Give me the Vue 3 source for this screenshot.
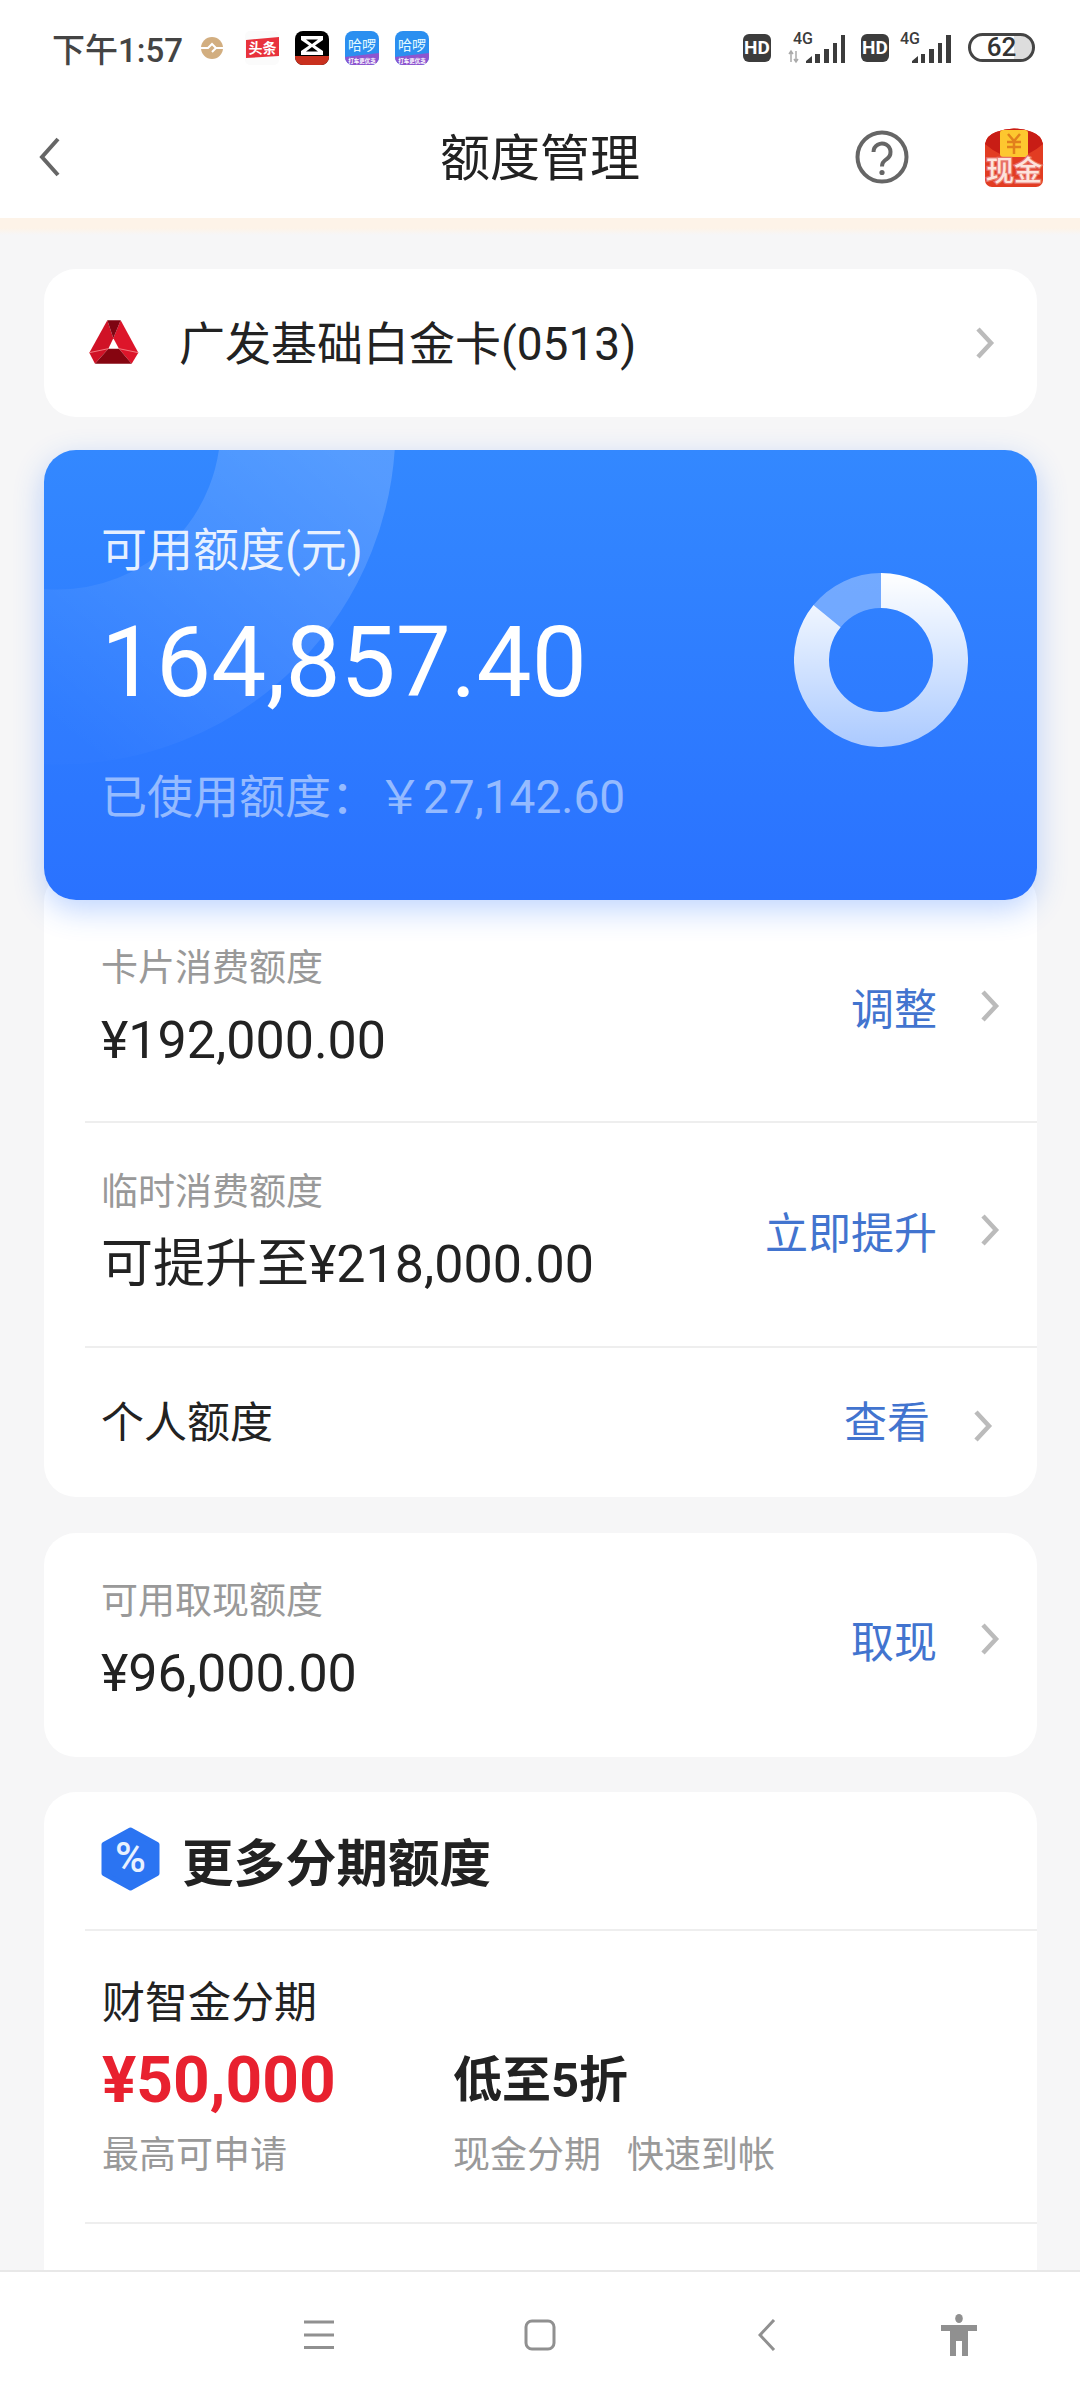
<template>
  <div class="page">
    <div class="status">
      <span class="time">下午1:57</span>
      <svg class="app first" viewBox="0 0 34 34">
        <circle cx="17" cy="17" r="11" fill="#d2ae80" />
        <path d="M6 17h7l4-4 4 4-4 4M21 17h7" fill="none" stroke="#fff" stroke-width="2" />
      </svg>
      <svg class="app" viewBox="0 0 34 34">
        <rect width="34" height="34" rx="5" fill="#fbfbfb" />
        <path d="M1 9 34 6v19L1 27z" fill="#e8323c" />
        <text x="17.5" y="22" text-anchor="middle" font-size="14" font-weight="700" fill="#fff">头条</text>
      </svg>
      <svg class="app" viewBox="0 0 34 34">
        <rect width="34" height="34" rx="8" fill="#000" />
        <path d="M0 25h34v1a8 8 0 0 1-8 8H8a8 8 0 0 1-8-8z" fill="#c9301e" />
        <path d="M6 5h22v4L20 14.500 28 20v4H6v-4l8-5.500L6 9zM11 8.500 17 13l6-4.500zM11 20.500h12L17 16z" fill="#fff" fill-rule="evenodd" />
      </svg>
      <svg v-for="n in 2" :key="n" class="app" viewBox="0 0 34 34">
        <rect width="34" height="34" rx="8" fill="#2b8ff0" />
        <path d="M0 26 34 22v4a8 8 0 0 1-8 8H8a8 8 0 0 1-8-8z" fill="#8e55cf" />
        <text x="17" y="19" text-anchor="middle" font-size="14" fill="#e6fbff">哈啰</text>
        <text x="17" y="31.500" text-anchor="middle" font-size="5.500" font-weight="700" fill="#fff">打车更优惠</text>
      </svg>
      <div class="status-right">
        <span class="hd">HD</span>
        <svg class="sig1" width="58" height="40" viewBox="0 -4 58 40">
          <text x="5" y="12" font-size="16" font-weight="500" fill="#3c3c3c">4G</text>
          <path d="M3 19v11M1 22l2-3 2 3M8 30V19M6 27l2 3 2-3" fill="none" stroke="#aaa" stroke-width="1.500" />
          <path d="M18 31v-2l6-5v7zM27 31v-9h5v9zM36 31V17h5v14zM45 31V11h4v20zM53 31V3h4v28z" fill="#3c3c3c" />
        </svg>
        <span class="hd hd2">HD</span>
        <svg class="sig2" width="52" height="40" viewBox="0 -4 52 40">
          <text x="1" y="12" font-size="16" font-weight="500" fill="#3c3c3c">4G</text>
          <path d="M13 31v-2l6-5v7zM22 31v-9h4v9zM30 31V17h5v14zM39 31V11h4v20zM47 31V3h5v28z" fill="#3c3c3c" />
        </svg>
        <span class="battery">62</span>
      </div>
    </div>

    <div class="nav">
      <svg class="back" width="22" height="40" viewBox="0 0 22 40">
        <path d="M19 2 3 20l16 18" fill="none" stroke="#666" stroke-width="4" />
      </svg>
      <div class="title">额度管理</div>
      <svg class="help" width="54" height="54" viewBox="0 0 54 54">
        <circle cx="27" cy="27" r="24.500" fill="none" stroke="#666" stroke-width="4" />
        <path d="M18.500 22a8.500 8.500 0 1 1 13 7.200c-3 2-4.500 3.600-4.500 7.300" fill="none" stroke="#666" stroke-width="4" />
        <circle cx="27" cy="42.500" r="2.600" fill="#666" />
      </svg>
      <svg class="packet" width="60" height="60" viewBox="0 0 60 60">
        <path d="M1 17Q3 8 12 5 30-2 48 5q9 3 11 12v36a7 7 0 0 1-7 7H8a7 7 0 0 1-7-7z" fill="#e23c22" />
        <path d="M1 17Q3 8 12 5 30-2 48 5q9 3 11 12Q44 30 30 30T1 17z" fill="#c81d15" />
        <rect x="16" y="3" width="28" height="27" rx="3" fill="#fdc72f" />
        <path d="M24 7l6 7 6-7M23 15h14M23 20h14M30 14v13" fill="none" stroke="#e2801c" stroke-width="2.500" />
        <text x="30" y="54" text-anchor="middle" font-size="28" font-weight="500" fill="#fde3dc" stroke="#e8736a" stroke-width="2.500" paint-order="stroke">现金</text>
      </svg>
    </div>
    <div class="strip"></div>

    <div class="main">
      <div class="card bank">
        <svg class="bank-logo" width="90" height="80" viewBox="0 0 270 240">
          <path d="M112 58 130 112 115 143 75 188 58 155z" fill="#d01226" />
          <path d="M152 58 205 155 185 188 147 143 130 112z" fill="#dd152a" />
          <path d="M112 58h40l-22 54z" fill="#7d0512" />
          <path d="M115 143h32l38 45H75z" fill="#860510" />
          <path d="M58 155l57-12M147 143l58 12" stroke="#f27a80" stroke-width="3" />
        </svg>
        <span class="bank-name">广发基础白金卡(0513)</span>
        <svg class="bank-chev" width="22" height="34" viewBox="0 0 22 34">
          <path d="M4 3l13 14L4 31" fill="none" stroke="#bbb" stroke-width="4.500" />
        </svg>
      </div>

      <div class="hero">
        <svg class="hero-bg" width="993" height="450" viewBox="0 0 993 450">
          <defs>
            <linearGradient id="band" gradientUnits="userSpaceOnUse" x1="300" y1="0" x2="60" y2="310">
              <stop offset="0" stop-color="#fff" stop-opacity="0.17" />
              <stop offset="1" stop-color="#fff" stop-opacity="0.01" />
            </linearGradient>
          </defs>
          <circle cx="14" cy="-23" r="250" fill="none" stroke="url(#band)" stroke-width="175" />
        </svg>
        <div class="hero-text">
          <div class="hero-label">可用额度(元)</div>
          <div class="hero-amount">164,857.40</div>
          <div class="hero-used">已使用额度：￥27,142.60</div>
        </div>
        <svg class="donut" width="174" height="174" viewBox="0 0 174 174">
          <defs>
            <linearGradient id="ring" gradientUnits="userSpaceOnUse" x1="0" y1="0" x2="0" y2="174">
              <stop offset="0" stop-color="#fff" />
              <stop offset="1" stop-color="#fff" stop-opacity="0.6" />
            </linearGradient>
          </defs>
          <path :d="availArc" fill="none" stroke="url(#ring)" stroke-width="35" />
          <path :d="usedArc" fill="none" stroke="#fff" stroke-opacity="0.32" stroke-width="35" />
        </svg>
      </div>

      <div class="card limits">
        <div v-for="row in rows" :key="row.label" class="row" :class="row.cls">
          <div class="row-text">
            <div class="row-label">{{ row.label }}</div>
            <div class="row-value">{{ row.value }}</div>
          </div>
          <span class="link">{{ row.link }}</span>
          <svg class="chev" width="22" height="34" viewBox="0 0 22 34">
            <path d="M4 3l13 14L4 31" fill="none" stroke="#bbb" stroke-width="4.500" />
          </svg>
        </div>
        <div class="row row-plain">
          <span class="plain-label">个人额度</span>
          <span class="link">查看</span>
          <svg class="chev" width="22" height="34" viewBox="0 0 22 34">
            <path d="M4 3l13 14L4 31" fill="none" stroke="#bbb" stroke-width="4.500" />
          </svg>
        </div>
      </div>

      <div class="card cash">
        <div class="row-text">
          <div class="row-label">可用取现额度</div>
          <div class="row-value">¥96,000.00</div>
        </div>
        <span class="link">取现</span>
        <svg class="chev" width="22" height="34" viewBox="0 0 22 34">
          <path d="M4 3l13 14L4 31" fill="none" stroke="#bbb" stroke-width="4.500" />
        </svg>
      </div>

      <div class="card more">
        <div class="more-head">
          <svg class="hex" width="59" height="64" viewBox="0 0 59 64">
            <path d="M29.500 3 56 17.500v29L29.500 61 3 46.500v-29z" fill="#2b74f2" stroke="#2b74f2" stroke-width="5" stroke-linejoin="round" />
            <text x="29.500" y="45" text-anchor="middle" font-size="42" font-weight="500" fill="#e8f1ff">%</text>
          </svg>
          <span class="more-title">更多分期额度</span>
        </div>
        <div class="plan">
          <div class="plan-name">财智金分期</div>
          <div class="plan-grid">
            <div class="plan-red">¥50,000</div>
            <div class="plan-rate">低至5折</div>
            <div class="plan-sub">最高可申请</div>
            <div class="plan-sub plan-tags"><span>现金分期</span><span>快速到帐</span></div>
          </div>
        </div>
      </div>
    </div>

    <div class="sysbar">
      <svg width="30" height="30" viewBox="0 0 30 30">
        <path d="M0 2h30M0 15h30M0 27.500h30" stroke="#909090" stroke-width="3" />
      </svg>
      <svg width="32" height="32" viewBox="0 0 32 32">
        <rect x="2" y="2" width="28" height="28" rx="6" fill="none" stroke="#909090" stroke-width="3" />
      </svg>
      <svg width="18" height="32" viewBox="0 0 18 32">
        <path d="M16 1 2 16l14 15" fill="none" stroke="#909090" stroke-width="3" />
      </svg>
      <svg width="36" height="42" viewBox="0 0 36 42">
        <ellipse cx="18" cy="4.500" rx="3.800" ry="4.500" fill="#909090" />
        <path d="M0 11h36v6H27v25h-6V27h-6v15H9V17H0z" fill="#909090" />
      </svg>
    </div>
  </div>
</template>

<script setup>
const limit = 192000
const used = 27142.6

const rows = [
  { label: "卡片消费额度", value: "¥192,000.00", link: "调整", cls: "row-first" },
  { label: "临时消费额度", value: "可提升至¥218,000.00", link: "立即提升", cls: "row-second" },
]

function arc(from, to) {
  const r = 69.5
  const pt = (deg) => {
    const a = (deg * Math.PI) / 180
    return (87 + r * Math.sin(a)).toFixed(2) + " " + (87 - r * Math.cos(a)).toFixed(2)
  }
  const large = to - from > 180 ? 1 : 0
  return "M" + pt(from) + " A" + r + " " + r + " 0 " + large + " 1 " + pt(to)
}

const usedDeg = (used / limit) * 360
const availArc = arc(0, 360 - usedDeg)
const usedArc = arc(360 - usedDeg, 360)
</script>

<style>
html,
body {
  margin: 0;
  background: #fff;
}
</style>

<style scoped>
.page {
  width: 1080px;
  height: 2400px;
  display: flex;
  flex-direction: column;
  overflow: hidden;
  background: #f6f6f7;
  font-family: Roboto, "Noto Sans CJK SC", sans-serif;
  color: #222;
}
svg text {
  font-family: Roboto, "Noto Sans CJK SC", sans-serif;
}

/* status bar */
.status {
  height: 95px;
  flex: none;
  display: flex;
  align-items: center;
  padding: 0 45px 0 52px;
  background: #fff;
  box-sizing: border-box;
}
.time {
  font-size: 33px;
  font-weight: 500;
  color: #444;
  width: 143px;
}
.app {
  width: 34px;
  height: 34px;
  margin-left: 16px;
  flex: none;
}
.app.first {
  margin-left: 0;
}
.status-right {
  margin-left: auto;
  display: flex;
  align-items: center;
}
.hd {
  width: 28px;
  height: 28px;
  border-radius: 6px;
  background: #3c3c3c;
  color: #fff;
  font-size: 19px;
  font-weight: 700;
  line-height: 28px;
  text-align: center;
}
.sig1 {
  margin-left: 17px;
}
.hd2 {
  margin-left: 15px;
}
.sig2 {
  margin-left: 10px;
}
.battery {
  margin-left: 17px;
  width: 67px;
  height: 29px;
  box-sizing: border-box;
  border: 3px solid #444;
  border-radius: 15px;
  font-size: 26px;
  font-weight: 500;
  line-height: 23px;
  text-align: center;
  color: #333;
  background: linear-gradient(to right, #fff 70%, #ddd 70%);
}

/* nav */
.nav {
  height: 123px;
  flex: none;
  display: flex;
  align-items: center;
  background: #fff;
  padding-left: 39px;
}
.title {
  font-size: 50px;
  margin-left: 379px;
  margin-bottom: 6px;
  width: 200px;
  text-align: center;
}
.help {
  margin-left: 215px;
}
.packet {
  margin-left: 75px;
}
.strip {
  height: 17px;
  flex: none;
  background: linear-gradient(to bottom, #fdf3e8 60%, #f6f6f7);
}

/* content */
.main {
  flex: 1;
  min-height: 0;
  overflow: hidden;
  padding: 34px 43px 0 44px;
}
.card {
  background: #fff;
  border-radius: 32px;
}
.bank {
  height: 148px;
  display: flex;
  align-items: center;
  padding-left: 26px;
}
.bank-logo {
  margin-bottom: 4px;
}
.bank-name {
  font-size: 46px;
  margin-left: 19px;
  margin-bottom: 6px;
}
.bank-chev {
  margin-left: auto;
  margin-right: 41px;
}
.hero {
  position: relative;
  z-index: 1;
  margin-top: 33px;
  height: 450px;
  border-radius: 32px;
  overflow: hidden;
  display: flex;
  background: linear-gradient(to bottom, #3388ff, #2a72ff);
  box-shadow: 0 10px 30px rgba(42, 115, 255, 0.3);
}
.hero-bg {
  position: absolute;
  left: 0;
  top: 0;
}
.hero-text {
  position: relative;
  padding: 70px 0 0 57px;
  color: #fff;
}
.hero-label {
  font-size: 46px;
  line-height: 60px;
  color: rgba(255, 255, 255, 0.88);
}
.hero-amount {
  font-size: 98px;
  line-height: 110px;
  margin-top: 28px;
}
.hero-used {
  font-size: 46px;
  line-height: 60px;
  margin-top: 49px;
  color: rgba(255, 255, 255, 0.5);
}
.donut {
  position: relative;
  margin: 123px 69px 0 auto;
}
.limits {
  margin-top: -30px;
  padding-top: 30px;
  height: 597px;
}
.row {
  display: flex;
  align-items: center;
  margin-left: 41px;
  padding-left: 16px;
  padding-right: 36px;
  border-bottom: 2px solid #eee;
  box-sizing: border-box;
}
.row-first {
  height: 223px;
  padding-top: 43px;
  padding-bottom: 52px;
}
.row-second {
  height: 225px;
  padding-top: 43px;
  padding-bottom: 52px;
}
.row-plain {
  height: 149px;
  border-bottom: none;
  padding-right: 43px;
  padding-bottom: 8px;
}
.row-text {
  flex: 1;
  padding-top: 3px;
}
.row-label {
  font-size: 37px;
  line-height: 50px;
  color: #999;
}
.row-value {
  font-size: 52px;
  line-height: 60px;
  margin-top: 17px;
}
.plain-label {
  flex: 1;
  font-size: 43px;
}
.link {
  font-size: 43px;
  color: #4274cf;
}
.chev {
  margin-left: 42px;
  flex: none;
}
.row-plain .chev {
  margin-top: 14px;
}
.cash {
  margin-top: 36px;
  height: 224px;
  display: flex;
  align-items: center;
  padding: 0 36px 12px 57px;
  box-sizing: border-box;
}
.more {
  margin-top: 35px;
  padding-left: 41px;
  height: 600px;
}
.more-head {
  height: 139px;
  display: flex;
  align-items: center;
  border-bottom: 2px solid #eee;
  padding-left: 16px;
  padding-bottom: 3px;
  box-sizing: border-box;
}
.more-title {
  font-size: 51.5px;
  font-weight: 700;
  margin-left: 22px;
}
.plan {
  padding: 44px 0 0 17px;
  height: 293px;
  box-sizing: border-box;
  border-bottom: 2px solid #eee;
}
.plan-name {
  font-size: 43px;
  line-height: 56px;
}
.plan-grid {
  display: grid;
  grid-template-columns: 351px 1fr;
  margin-top: 10px;
}
.plan-red {
  font-size: 64px;
  font-weight: 700;
  color: #e8212f;
  line-height: 80px;
}
.plan-rate {
  font-size: 49px;
  font-weight: 700;
  line-height: 80px;
}
.plan-sub {
  font-size: 37px;
  line-height: 50px;
  color: #999;
  margin-top: 10px;
}
.plan-tags {
  display: flex;
  gap: 26px;
}

/* system bar */
.sysbar {
  height: 130px;
  flex: none;
  box-sizing: border-box;
  background: #fff;
  border-top: 2px solid #e8e8e8;
  padding-left: 208px;
  padding-bottom: 2px;
  display: grid;
  grid-template-columns: 221px 222px 232px 152px;
  justify-items: center;
  align-items: center;
}
</style>
